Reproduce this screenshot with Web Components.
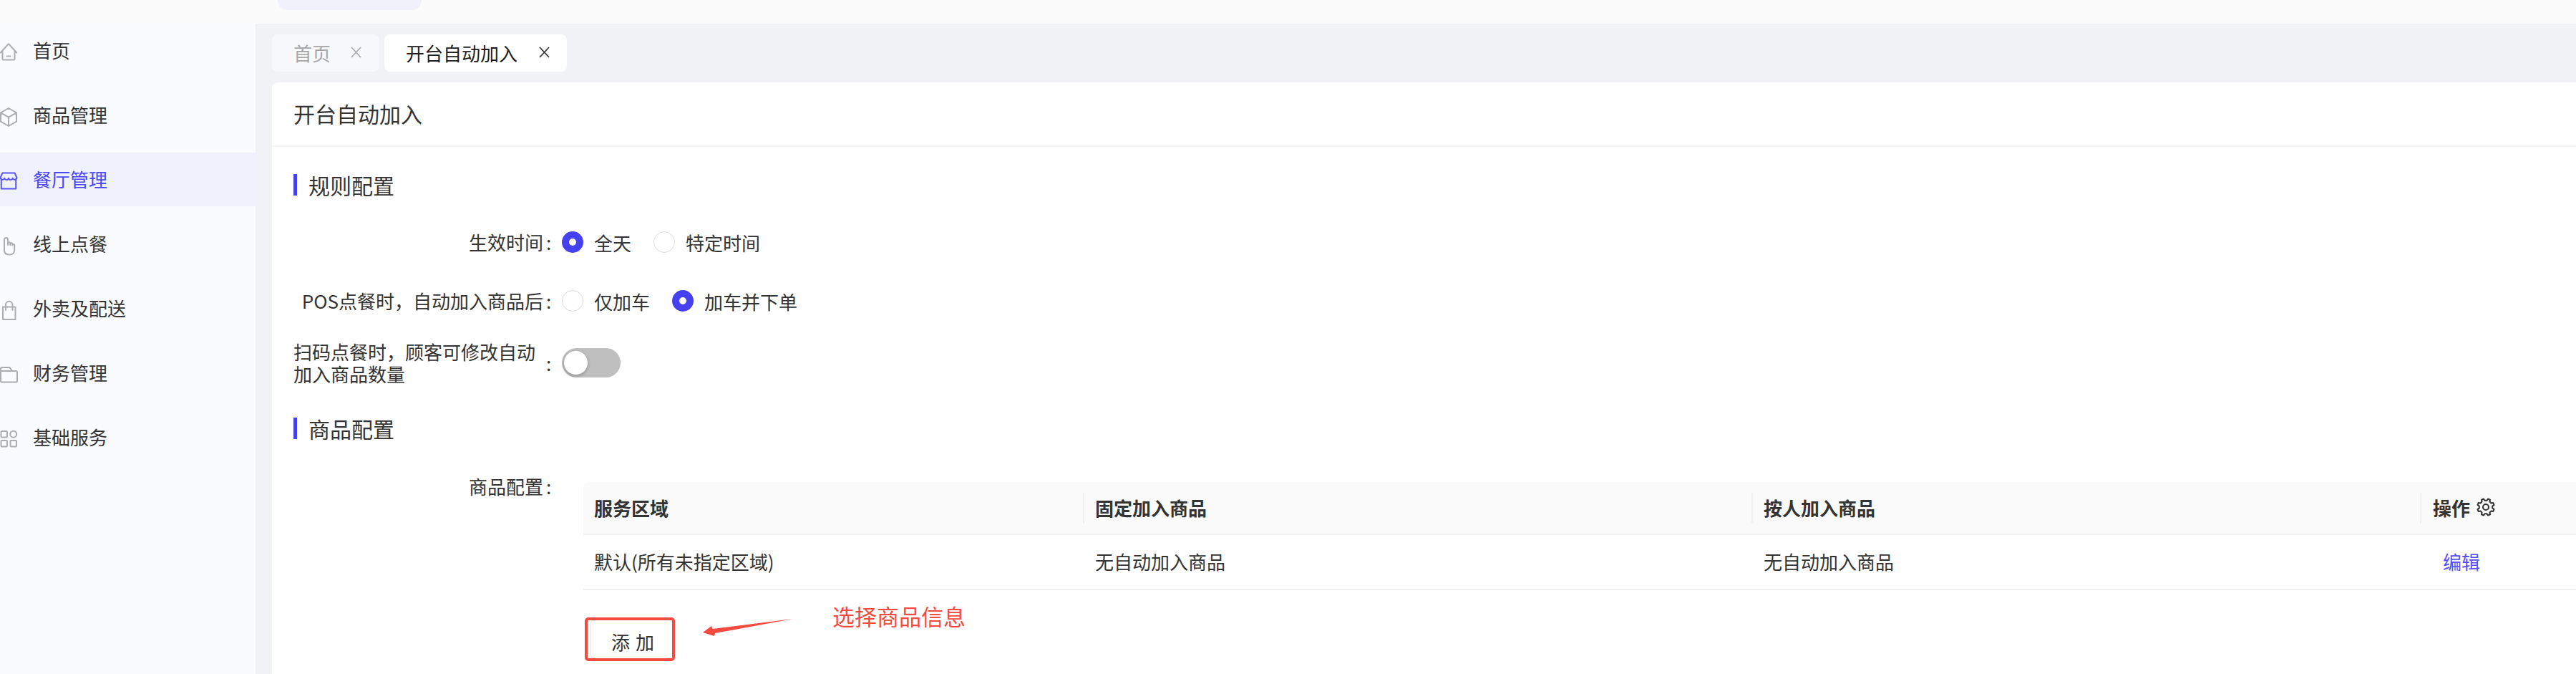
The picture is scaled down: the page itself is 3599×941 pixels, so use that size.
<!doctype html>
<html lang="zh"><head><meta charset="utf-8">
<style>
html,body{margin:0;padding:0;height:100%;overflow:hidden}
body{font-family:"Noto Sans CJK SC","Noto Sans",sans-serif;font-size:26px;color:#333}
</style></head>
<body>
<x-app>
  <x-topbar slot="top"></x-topbar>
  <x-sidebar slot="side">
    <x-menu-item icon="home">首页</x-menu-item>
    <x-menu-item icon="box">商品管理</x-menu-item>
    <x-menu-item icon="shop" active>餐厅管理</x-menu-item>
    <x-menu-item icon="hand">线上点餐</x-menu-item>
    <x-menu-item icon="bag">外卖及配送</x-menu-item>
    <x-menu-item icon="folder">财务管理</x-menu-item>
    <x-menu-item icon="grid">基础服务</x-menu-item>
  </x-sidebar>
  <x-tabs slot="tabs">
    <x-tab>首页</x-tab>
    <x-tab active>开台自动加入</x-tab>
  </x-tabs>
  <x-card slot="main" heading="开台自动加入">
    <x-section style="margin-top:38px">规则配置</x-section>
    <x-form-row label="生效时间" style="margin-top:50px">
      <x-radio checked>全天</x-radio><x-radio>特定时间</x-radio>
    </x-form-row>
    <x-form-row label="POS点餐时，自动加入商品后" style="margin-top:52px">
      <x-radio>仅加车</x-radio><x-radio checked>加车并下单</x-radio>
    </x-form-row>
    <x-form-row multi label="扫码点餐时，顾客可修改自动加入商品数量" style="margin-top:40px">
      <x-switch></x-switch>
    </x-form-row>
    <x-section style="margin-top:44px">商品配置</x-section>
    <x-form-row top label="商品配置" style="margin-top:60px">
      <x-goods-table></x-goods-table>
    </x-form-row>
  </x-card>
</x-app>
<script>
const ICONS={
home:'<path d="M.8 13.500 12 1.200l11.200 12.300M3.500 11.500V22c0 1 .6 1.500 1.500 1.500h14c.9 0 1.500-.5 1.500-1.500V11.500M9.500 18.500h5"/>',
box:'<path d="M12 1 23 7.300v12.400L12 26 1 19.700V7.300zM1 7.300l11 6.300 11-6.300M12 13.600V26"/>',
shop:'<path d="M3.500 1.500h17L23.500 8c-.6 3.600-4.700 3.800-5.800.8-1 3-4.600 3-5.700 0-1.100 3-4.700 3-5.700 0C5.200 11.800 1.100 11.600.5 8zM1.800 9.500v14h20.400v-14"/>',
hand:'<path d="M6 13V4.500a2.500 2.500 0 0 1 5 0V12M11 12V9.800a1.600 1.600 0 0 1 3.200 0V12M14.200 12v-1.200a1.500 1.500 0 0 1 3 0V12M17.200 12.500a1.500 1.500 0 0 1 3 0V19c0 4-2.800 6.500-6.800 6.500-4.500 0-7-2-7.400-5V13"/>',
bag:'<path d="M4 8.500h17.500V26H4zM8 13V5.500a4.700 4.700 0 0 1 9.500 0V13"/>',
folder:'<path d="M1 8V4.500C1 3.700 1.700 3 2.500 3h11L17 8h5.500c.8 0 1.500.7 1.500 1.500V22c0 .8-.7 1.500-1.500 1.500h-20C1.700 23.500 1 22.800 1 22zM1 8h16"/>',
grid:'<rect x="1.500" y="2" width="8.500" height="8.500" rx="1.200"/><rect x="1.500" y="15" width="8.500" height="8.500" rx="1.200"/><rect x="14.500" y="15" width="8.500" height="8.500" rx="1.200"/><circle cx="18.700" cy="6.200" r="4.500"/>'
};
function gear(){
  let d='';const n=8;
  for(let i=0;i<n;i++){
    const a=i*2*Math.PI/n+Math.PI/8, w=Math.PI/n;
    const pts=[[8.600,a-w*.62],[11,a-w*.34],[11,a+w*.34],[8.600,a+w*.62]];
    pts.forEach(([r,t],k)=>{d+=(i===0&&k===0?'M':'L')+(12+r*Math.cos(t)).toFixed(2)+' '+(12+r*Math.sin(t)).toFixed(2)});
  }
  return '<path d="'+d+'Z"/><circle cx="12" cy="12" r="3.700"/>';
}
function def(name,css,html){
  customElements.define(name,class extends HTMLElement{
    connectedCallback(){
      if(this.shadowRoot)return;
      const r=this.attachShadow({mode:'open'});
      r.innerHTML='<style>'+css+'</style>'+(typeof html==='function'?html(this):html);
    }
  });
}
def('x-app',`
:host{display:grid;grid-template-columns:357px 1fr;grid-template-rows:33px 1fr;height:941px;width:3599px;overflow:hidden}
.top{grid-column:1/3}
.side{grid-row:2;background:#fafbfe;min-height:0}
.right{grid-row:2;background:#f1f2f6;display:flex;flex-direction:column;padding:15px 0 0 23px;min-width:0;min-height:0}
`,`<div class="top"><slot name="top"></slot></div><div class="side"><slot name="side"></slot></div><div class="right"><slot name="tabs"></slot><slot name="main"></slot></div>`);
def('x-topbar',`
:host{display:block;height:33px;background:#fbfbfb;overflow:hidden;padding-left:388px}
.b{width:201px;height:14px;background:#f0f1fb;border-radius:0 0 30px 30px}
`,`<div class="b"></div>`);
def('x-sidebar',`:host{display:flex;flex-direction:column;gap:15px}`,`<slot></slot>`);
def('x-menu-item',`
:host{display:flex;align-items:center;height:75px;gap:22px;color:#333;background:transparent}
:host([active]){background:#eff1fc;color:#4c47f4}
svg{width:24px;height:26px;flex:none;fill:none;stroke:#adadad;stroke-width:2;stroke-linejoin:round;stroke-linecap:round;overflow:visible;position:relative;top:2px}
:host([active]) svg{stroke:#5b56f4}
span{position:relative;top:-1px}
`,h=>`<svg viewBox="0 0 24 26">${ICONS[h.getAttribute('icon')]}</svg><span><slot></slot></span>`);
def('x-tabs',`:host{display:flex;gap:7px;height:52px;margin-bottom:15px}`,`<slot></slot>`);
def('x-tab',`
:host{display:flex;align-items:center;padding:0 25px 0 30px;background:#f7f8fa;color:#a6a6a6;border-radius:8px;gap:28px;font-size:26px}
:host([active]){background:#fff;color:#1c1c1c;padding:0 24px 0 30px;gap:30px}
svg{width:15px;height:16px;stroke:#a9a9a9;stroke-width:1.700;fill:none;position:relative;top:-1px}
:host([active]) svg{stroke:#333}
span{position:relative;top:-1px}
`,`<span><slot></slot></span><svg viewBox="0 0 15 16"><path d="M1 1l13 14M14 1 1 15"/></svg>`);
def('x-card',`
:host{display:block;flex:1;background:#fff;border-radius:8px 0 0 0;min-height:0;overflow:hidden;position:relative}
header{height:86px;padding:0 0 2px 30px;display:flex;align-items:center;font-size:30px;color:#333;border-bottom:2px solid #f4f4f4}
.b{padding:0 0 0 30px}
`,h=>`<header>${h.getAttribute('heading')}</header><div class="b"><slot></slot></div>`);
def('x-section',`
:host{display:flex;align-items:center;height:30px;font-size:30px;color:#333;gap:16px}
i{width:5px;height:30px;background:#4641f0;flex:none}
`,`<i></i><span><slot></slot></span>`);
def('x-form-row',`
:host{display:flex;align-items:center;position:relative}
:host([top]){align-items:flex-start}
.l{width:349px;flex:none;text-align:right;color:#333;line-height:30px;white-space:nowrap}
:host([multi]) .l{white-space:normal;text-align:left;width:340px;padding-right:9px;padding-bottom:2px;line-height:31px}
:host([top]) .l{margin-top:-9px}
.c{width:26px;flex:none;padding-left:4px;line-height:30px;box-sizing:border-box}
:host([top]) .c{margin-top:-9px}
.r{display:flex;gap:31px;align-items:center;flex:1;min-width:0}
:host([top]) .r{margin-left:30px}
`,h=>`<div class="l">${h.getAttribute('label')}</div><div class="c">:</div><div class="r"><slot></slot></div>`);
def('x-radio',`
:host{display:flex;align-items:center;gap:15px;height:30px;color:#333}
i{width:30px;height:30px;box-sizing:border-box;border-radius:50%;border:1px solid #dcdcdc;background:#fff;flex:none}
:host([checked]) i{border:10px solid #4641f0}
`,`<i></i><span><slot></slot></span>`);
def('x-switch',`
:host{display:block;width:82px;height:41px;margin-top:-2px;background:#bfbfbf;border-radius:21px;position:relative}
i{position:absolute;left:3px;top:4px;width:33px;height:33px;border-radius:50%;background:#fff;box-shadow:0 2px 5px rgba(0,0,0,.25)}
`,`<i></i>`);
def('x-goods-table',`
:host{display:block;position:relative;width:2784px}
.row{display:grid;grid-template-columns:699px 934px 934px 217px;align-items:center}
.h{height:72px;background:#fafafa;border-radius:8px 0 0 0;font-weight:700;border-bottom:2px solid #f0f0f0}
.d{height:75px;border-bottom:2px solid #f0f0f0}
.row>div{padding-left:15px;position:relative;top:-1px;white-space:nowrap}
.h>div:not(:first-child){padding-left:16px}
.h>div:not(:first-child)::before{content:"";position:absolute;left:-1px;top:-2px;width:2px;height:42px;background:#f0f0f0}
.h>div:last-child{display:flex;align-items:center;gap:9px;height:36px;padding-left:17px}
.d>div:not(:first-child){padding-left:16px}
.d>div.op{color:#544ff5;padding-left:31px}
svg.g{width:26px;height:26px;fill:none;stroke:#333;stroke-width:1.900;stroke-linejoin:round}
.add{margin:38px 0 0 2px;width:126px;height:61px;box-sizing:border-box;border:4px solid #f44a3f;border-radius:5px;display:flex;align-items:center;justify-content:center;word-spacing:2px;padding-left:8px;padding-top:6px;background:#fff;color:#333;position:relative}
.add::before{content:"";position:absolute;left:3px;top:0;bottom:0;width:8px;border:solid #e2e2e2;border-width:1px 0 1px 1px;border-radius:6px 0 0 6px;box-sizing:border-box}
.note{position:absolute;left:348px;top:164px;font-size:31px;color:#f44a3f;white-space:nowrap}
.arrow{position:absolute;left:165px;top:191px;width:130px;height:26px;overflow:visible}
.arrow path{fill:#f44a3f;stroke:none}
`,`<div class="row h"><div>服务区域</div><div>固定加入商品</div><div>按人加入商品</div><div>操作<svg class="g" viewBox="0 0 24 24">${gear()}</svg></div></div>
<div class="row d"><div>默认(所有未指定区域)</div><div>无自动加入商品</div><div>无自动加入商品</div><div class="op">编辑</div></div>
<div class="add">添 加</div>
<svg class="arrow" viewBox="0 0 130 26"><path d="M128 0 19 20 18 24 2 19 14 10 15.500 14z"/></svg>
<div class="note">选择商品信息</div>`);
</script>
</body></html>
